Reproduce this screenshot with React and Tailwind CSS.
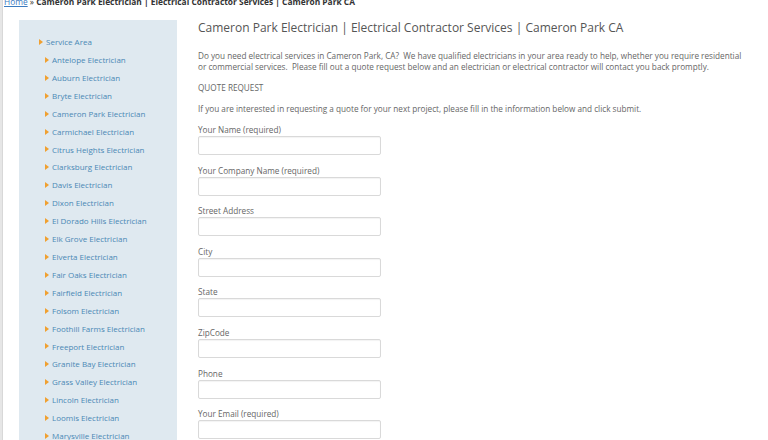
import React from 'react';

const areas = [
  'Antelope Electrician',
  'Auburn Electrician',
  'Bryte Electrician',
  'Cameron Park Electrician',
  'Carmichael Electrician',
  'Citrus Heights Electrician',
  'Clarksburg Electrician',
  'Davis Electrician',
  'Dixon Electrician',
  'El Dorado Hills Electrician',
  'Elk Grove Electrician',
  'Elverta Electrician',
  'Fair Oaks Electrician',
  'Fairfield Electrician',
  'Folsom Electrician',
  'Foothill Farms Electrician',
  'Freeport Electrician',
  'Granite Bay Electrician',
  'Grass Valley Electrician',
  'Lincoln Electrician',
  'Loomis Electrician',
  'Marysville Electrician',
];

const fields = [
  'Your Name (required)',
  'Your Company Name (required)',
  'Street Address',
  'City',
  'State',
  'ZipCode',
  'Phone',
  'Your Email (required)',
];

const Arrow = () => (
  <span className="inline-block w-0 h-0 border-y-[3px] border-y-transparent border-l-[4px] border-l-[#f0a030] mr-[3px]" />
);

export default function App() {
  return (
    <div
      className="h-[440px] w-[768px] overflow-hidden bg-white flex"
      style={{ fontFamily: '"Open Sans", "Liberation Sans", sans-serif' }}
    >
      {/* left stripe */}
      <div className="w-[3px] shrink-0 bg-[#e6e6e6] border-r border-[#d8d8d8]" />

      <div className="flex-1 flex flex-col">
        {/* Breadcrumb */}
        <div className="mt-[-5px] pl-[1px] text-[8.4px] leading-[13px] text-[#333] whitespace-nowrap">
          <a className="text-[#3b7bbf] underline">Home</a>
          <span> » </span>
          <span className="font-bold">
            Cameron Park Electrician | Electrical Contractor Services | Cameron Park CA
          </span>
        </div>

        <div className="flex mt-[12px]">
          {/* Sidebar */}
          <aside className="ml-[16px] w-[158px] shrink-0 bg-[#dfe9f0] pt-[13px] pl-[20px] h-[440px]">
            <div className="flex items-center text-[8px] leading-[18px] text-[#4a88b5]">
              <Arrow />
              Service Area
            </div>
            <ul className="pl-[6px]">
              {areas.map((a) => (
                <li
                  key={a}
                  className="flex items-center text-[8px] leading-[17.9px] text-[#4a88b5] whitespace-nowrap"
                >
                  <Arrow />
                  {a}
                </li>
              ))}
            </ul>
          </aside>

          {/* Content */}
          <main className="ml-[21px] w-[550px] shrink-0 text-[#666]">
            <h1 className="text-[12px] leading-[16px] text-[#555] mt-[0px] whitespace-nowrap">
              Cameron Park Electrician | Electrical Contractor Services | Cameron Park CA
            </h1>
            <p className="mt-[14px] text-[8.2px] leading-[11px]">
              Do you need electrical services in Cameron Park, CA?&nbsp; We have qualified
              electricians in your area ready to help, whether you require residential or
              commercial services.&nbsp; Please fill out a quote request below and an electrician
              or electrical contractor will contact you back promptly.
            </p>
            <p className="mt-[10px] text-[8.2px] leading-[11px]">QUOTE REQUEST</p>
            <p className="mt-[10px] text-[8.2px] leading-[11px]">
              If you are interested in requesting a quote for your next project, please fill in
              the information below and click submit.
            </p>
            <div className="mt-[10px] flex flex-col">
              {fields.map((f) => (
                <div key={f} className="flex flex-col mb-[9.6px]">
                  <label className="text-[8.2px] leading-[12px] text-[#666]">{f}</label>
                  <input
                    type="text"
                    className="w-[183px] h-[19px] border border-[#d9d9d9] rounded-[2px] shadow-[inset_0_1px_1px_rgba(0,0,0,0.05)] bg-white"
                  />
                </div>
              ))}
            </div>
          </main>
        </div>
      </div>
    </div>
  );
}
